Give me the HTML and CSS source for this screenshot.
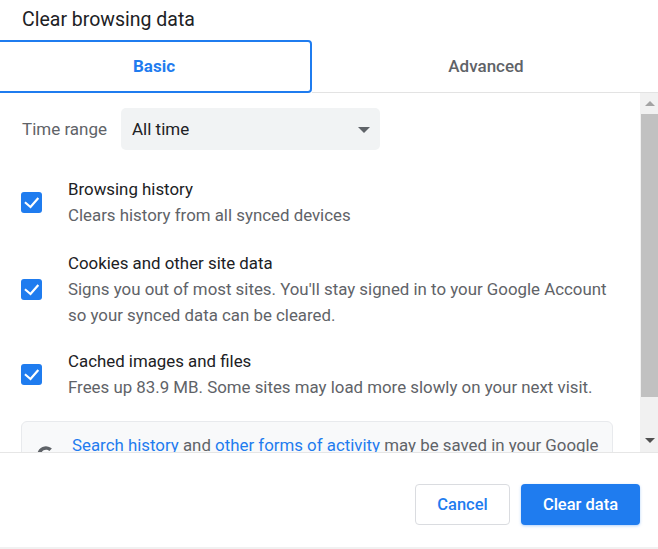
FILE: index.html
```html
<!DOCTYPE html>
<html lang="en">
<head>
<meta charset="utf-8">
<title>Clear browsing data</title>
<link rel="stylesheet" href="styles.css">
</head>
<body>
<div class="dialog">
  <div class="header">
    <h1 class="title">Clear browsing data</h1>
  </div>
  <div class="tabs">
    <div class="tab tab-active">Basic</div>
    <div class="tab tab-idle">Advanced</div>
  </div>
  <div class="body">
    <div class="content">
      <div class="time-row">
        <span class="time-label">Time range</span>
        <div class="select">
          <span class="select-value">All time</span>
          <span class="select-arrow"></span>
        </div>
      </div>
      <div class="item item-first">
        <span class="checkbox"><svg viewBox="0 0 21 21" width="21" height="21"><polyline points="4.8,11 9.5,15 16.6,6.8" fill="none" stroke="#fff" stroke-width="2.2" stroke-linecap="square"/></svg></span>
        <div class="item-text">
          <div class="item-title">Browsing history</div>
          <div class="item-desc">Clears history from all synced devices</div>
        </div>
      </div>
      <div class="item">
        <span class="checkbox"><svg viewBox="0 0 21 21" width="21" height="21"><polyline points="4.8,11 9.5,15 16.6,6.8" fill="none" stroke="#fff" stroke-width="2.2" stroke-linecap="square"/></svg></span>
        <div class="item-text">
          <div class="item-title">Cookies and other site data</div>
          <div class="item-desc">Signs you out of most sites. You'll stay signed in to your Google Account so your synced data can be cleared.</div>
        </div>
      </div>
      <div class="item">
        <span class="checkbox"><svg viewBox="0 0 21 21" width="21" height="21"><polyline points="4.8,11 9.5,15 16.6,6.8" fill="none" stroke="#fff" stroke-width="2.2" stroke-linecap="square"/></svg></span>
        <div class="item-text">
          <div class="item-title">Cached images and files</div>
          <div class="item-desc">Frees up 83.9 MB. Some sites may load more slowly on your next visit.</div>
        </div>
      </div>
      <div class="info">
        <svg class="info-icon" viewBox="0 0 24 24" width="22" height="22"><path d="M21 12.2c0-.7-.1-1.4-.2-2H12v3.8h5.1a4.4 4.4 0 0 1-1.9 2.9v2.4h3.1c1.8-1.7 2.7-4.1 2.7-7.1zM12 21.5c2.6 0 4.7-.9 6.3-2.3l-3.1-2.4c-.9.6-2 .9-3.2.9-2.5 0-4.6-1.7-5.3-3.9H3.5v2.5A9.5 9.5 0 0 0 12 21.5zM6.7 13.8a5.7 5.7 0 0 1 0-3.6V7.7H3.5a9.5 9.5 0 0 0 0 8.6l3.2-2.5zM12 6.3c1.4 0 2.7.5 3.7 1.4l2.7-2.7A9.5 9.5 0 0 0 3.5 7.7l3.2 2.5C7.4 8 9.5 6.3 12 6.3z" fill="#5f6368"/></svg>
        <p class="info-text"><a class="link">Search history</a> and <a class="link">other forms of activity</a> may be saved in your Google Account when you're signed in. You can delete them anytime.</p>
      </div>
    </div>
    <div class="scrollbar">
      <div class="sb-btn"><span class="sb-up"></span></div>
      <div class="sb-thumb"></div>
      <div class="sb-track"></div>
      <div class="sb-btn"><span class="sb-down"></span></div>
    </div>
  </div>
  <div class="footer">
    <button class="btn btn-cancel">Cancel</button>
    <button class="btn btn-primary">Clear data</button>
  </div>
</div>
</body>
</html>
```
FILE: styles.css
```css
* { box-sizing: border-box; }
html, body {
  margin: 0;
  padding: 0;
  background: #ffffff;
}
body {
  width: 658px;
  height: 549px;
  overflow: hidden;
  font-family: Roboto, "Liberation Sans", sans-serif;
  color: #202124;
}
.dialog {
  display: flex;
  flex-direction: column;
  height: 549px;
}
.header {
  height: 40px;
  padding: 8px 22px 0;
}
.title {
  margin: 0;
  font-size: 19.5px;
  line-height: 24px;
  font-weight: 400;
  color: #202124;
}
.tabs {
  display: flex;
  height: 53px;
  margin-left: -4px;
}
.tab {
  display: flex;
  align-items: center;
  justify-content: center;
  font-size: 17px;
  padding-bottom: 1px;
}
.tab-active {
  width: 316px;
  border: 2px solid #1f7cef;
  border-radius: 4px;
  color: #1f7cef;
  font-weight: 700;
}
.tab-idle {
  flex: 1;
  color: #5f6368;
  font-weight: 500;
  border-bottom: 1px solid #e3e3e3;
  padding-left: 2px;
}
.body {
  display: flex;
  height: 359px;
}
.content {
  flex: 1;
  overflow: hidden;
  padding: 15px 27px 0 21px;
}
.time-row {
  display: flex;
  align-items: center;
  height: 42px;
}
.time-label {
  width: 100px;
  padding-left: 1px;
  font-size: 17px;
  color: #5f6368;
}
.select {
  display: flex;
  align-items: center;
  justify-content: space-between;
  width: 259px;
  height: 42px;
  padding: 0 10px 0 11px;
  background: #f1f3f4;
  border-radius: 5px;
  font-size: 17px;
  color: #202124;
}
.select-arrow {
  width: 0;
  height: 0;
  border-left: 6px solid transparent;
  border-right: 6px solid transparent;
  border-top: 6px solid #5f6368;
  margin-top: 2px;
}
.item {
  display: flex;
  align-items: center;
  margin-top: 20px;
}
.item-first {
  margin-top: 26px;
}
.item-first + .item {
  margin-top: 22px;
}
.checkbox {
  flex: none;
  width: 21px;
  height: 21px;
  border-radius: 3px;
  background: #1f7cef;
  display: flex;
}
.item-text {
  margin-left: 26px;
  font-size: 16.85px;
  line-height: 26px;
}
.item-title { color: #202124; }
.item-desc { color: #5f6368; }
.info {
  display: flex;
  align-items: flex-start;
  margin-top: 21px;
  padding: 10px 4px 8px 13px;
  background: #f8f9fa;
  border: 1px solid #e8eaed;
  border-radius: 6px;
}
.info-icon {
  flex: none;
  margin-top: 12px;
}
.info-text {
  margin: 0 0 0 15px;
  font-size: 16.85px;
  line-height: 26px;
  color: #5f6368;
}
.link {
  color: #1f7cef;
  text-decoration: none;
}
.scrollbar {
  width: 18px;
  display: flex;
  flex-direction: column;
  background: #f1f1f1;
}
.sb-btn {
  height: 21px;
  display: flex;
  align-items: center;
  justify-content: center;
}
.sb-up {
  width: 0;
  height: 0;
  border-left: 5px solid transparent;
  border-right: 5px solid transparent;
  border-bottom: 5px solid #a3a3a3;
  margin-left: 1px;
}
.sb-down {
  width: 0;
  height: 0;
  border-left: 5px solid transparent;
  border-right: 5px solid transparent;
  border-top: 5px solid #505050;
  margin-left: 1px;
  margin-top: -2px;
}
.sb-thumb {
  height: 283px;
  margin-left: 1px;
  background: #c1c1c1;
}
.sb-track { flex: 1; }
.footer {
  flex: 1;
  display: flex;
  justify-content: flex-end;
  align-items: flex-start;
  gap: 11px;
  padding: 31px 18px 0 0;
  border-top: 1px solid #e6e6e6;
  border-bottom: 2px solid #f1f1f1;
  background: #ffffff;
}
.btn {
  height: 41px;
  font-family: Roboto, "Liberation Sans", sans-serif;
  font-size: 16.5px;
  font-weight: 500;
  border-radius: 4px;
  cursor: pointer;
}
.btn-cancel {
  width: 95px;
  background: #ffffff;
  color: #1f7cef;
  border: 1px solid #dadce0;
}
.btn-primary {
  width: 119px;
  background: #1f7cef;
  color: #ffffff;
  border: none;
  box-shadow: 0 1px 3px rgba(31, 124, 239, 0.35);
}
```
